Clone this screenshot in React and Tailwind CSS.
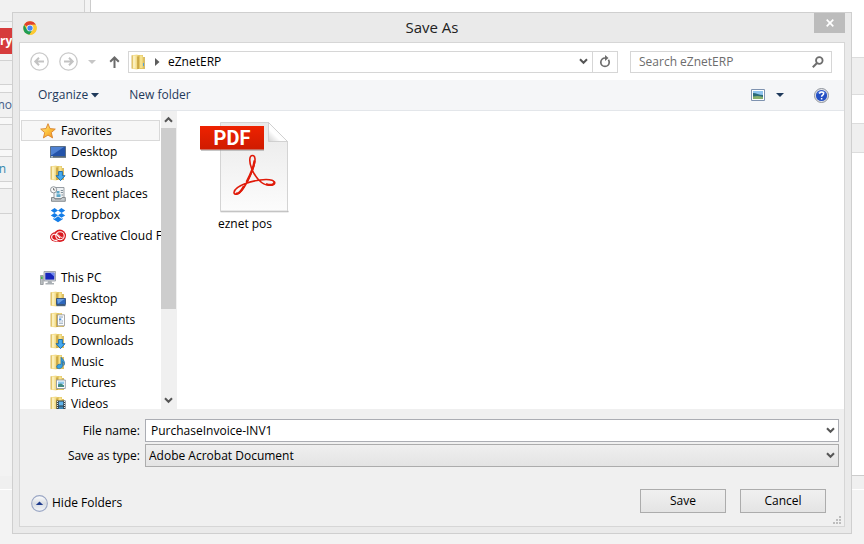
import React from "react";

const Chevron = ({ className = "" }) => (
  <svg width="9" height="7" viewBox="0 0 9 7" className={className} aria-hidden="true">
    <path d="M1 1.2 4.5 4.8 8 1.2" fill="none" stroke="#555555" strokeWidth="2" />
  </svg>
);

const ChromeLogo = () => (
  <svg width="14" height="14" viewBox="0 0 48 48" aria-hidden="true">
    <circle cx="24" cy="24" r="23" fill="#fcc934" />
    <path d="M24 24 4 12.5A23 23 0 0 1 44 12.5H24z" fill="#e0402f" />
    <path d="M4 12.5A23 23 0 0 0 22 47L34 30 24 24 14 30z" fill="#1f9d55" />
    <path d="M44 12.5A23 23 0 0 1 22 47L34 30 32 12.5z" fill="#fcc934" />
    <circle cx="24" cy="24" r="11.5" fill="#f4f4f4" />
    <circle cx="24" cy="24" r="9" fill="#4285f4" />
  </svg>
);

const NavArrow = ({ flip }) => (
  <svg width="19" height="19" viewBox="0 0 19 19" className={flip ? "rotate-180" : ""} aria-hidden="true">
    <circle cx="9.5" cy="9.5" r="8.7" fill="none" stroke="#c9c9c9" strokeWidth="1.3" />
    <path d="M5.5 9.5H14M9 5.8 5.3 9.5 9 13.2" fill="none" stroke="#c3c3c3" strokeWidth="2" />
  </svg>
);

const FolderBase = () => (
  <g>
    <path d="M6 1h6v2h1.500v12H6z" fill="#e3c766" />
    <path d="M9 1.500h2.500V14H9z" fill="#f5e190" />
    <path d="M1 1.200 6.500.500V15.500L1 14.800z" fill="#f4dd8a" />
    <path d="M2 1.800h2.500v12.500H2z" fill="#fbefbb" />
    <path d="M1 1.300v13.300M13.300 3v12" stroke="#cba53e" strokeWidth=".8" fill="none" />
    <path d="M7 2.500v12.500" stroke="#bd9430" strokeWidth="1.200" fill="none" />
  </g>
);

const Badges = {
  none: <path d="M12.500 9v3" stroke="#53a0d8" strokeWidth="1" />,
  download: (
    <path d="M8.6 6.5h3.8v4.2h2.6L10.5 15.6 6 10.7h2.6z" fill="#45aaf0" stroke="#1767a8" strokeWidth=".9" />
  ),
  desktop: (
    <g>
      <path d="M6.5 7.5h9v6h-9z" fill="#2d67bd" stroke="#294873" strokeWidth=".8" />
      <path d="M7 8h7.5L8 12.8z" fill="#699ee3" />
      <path d="M6.5 14h9v1.2h-9z" fill="#45617c" />
    </g>
  ),
  document: (
    <g>
      <path d="M7.5 2.8h7v11h-7z" fill="#fafcff" stroke="#939393" strokeWidth=".8" />
      <path d="M9 5h4M9 9h1.5M11.5 9H13M9 11.2h4" stroke="#8597aa" strokeWidth=".9" />
      <path d="M9 6.4h2.3v1.8H9z" fill="#4d94df" />
    </g>
  ),
  music: (
    <path d="M11 3.2v7.2c-2-.7-4.3.5-4.3 2.4 0 2.6 5.8 2.6 5.8-1.2V7.3c1.5 1 1.8 2.3 1.2 4.2 2-3 .3-5-2.7-8.3z" fill="#36a2e6" stroke="#1d679f" strokeWidth=".7" />
  ),
  picture: (
    <g>
      <path d="M6.5 5h8.8v8.5H6.5z" fill="#fff" stroke="#9199a1" strokeWidth=".9" />
      <path d="M8 6.5h6V9H8z" fill="#8fc8ed" />
      <path d="M8 9.2l3-.8 3 1.8V12H8z" fill="#438b83" />
    </g>
  ),
  video: (
    <g>
      <path d="M6.5 4.5h9v11h-9z" fill="#333e46" />
      <path d="M8.7 5.5h4.6v4H8.7z" fill="#5fb3ea" />
      <path d="M8.7 10.5h4.6v4H8.7z" fill="#3d86b7" />
      <path d="M7.5 5v10M14.5 5v10" stroke="#dfe5e9" strokeWidth="1" strokeDasharray="1 1" />
    </g>
  ),
};

const Folder = ({ badge = "none" }) => (
  <svg width="16" height="16" viewBox="0 0 16 16" aria-hidden="true">
    <FolderBase />
    {Badges[badge]}
  </svg>
);

const Star = () => (
  <svg width="16" height="16" viewBox="0 0 16 16" aria-hidden="true">
    <defs>
      <linearGradient id="star" x1="0" y1="0" x2="1" y2="1">
        <stop offset="0" stopColor="#fff2a5" />
        <stop offset=".5" stopColor="#fcc33f" />
        <stop offset="1" stopColor="#f08a1c" />
      </linearGradient>
    </defs>
    <path d="M8 .7 10 5.6l5.3.5-4 3.5 1.3 5.3L8 12.1l-4.600 2.800 1.300-5.300-4-3.500L6 5.600z" fill="url(#star)" stroke="#d9822b" strokeWidth=".9" strokeLinejoin="round" />
  </svg>
);

const DesktopIcon = () => (
  <svg width="16" height="16" viewBox="0 0 16 16" aria-hidden="true">
    <path d="M.5 2.5h15v10H.5z" fill="#2353a9" stroke="#5b6f86" />
    <path d="M1 3h13L2 11H1z" fill="#4f82d3" />
    <path d="M0 12.4h16v1.4H0z" fill="#53636f" />
    <path d="M1 12.8h2" stroke="#cfe2ef" />
  </svg>
);

const RecentIcon = () => (
  <svg width="16" height="16" viewBox="0 0 16 16" aria-hidden="true">
    <path d="M4 1.500h10v11H4z" fill="#eef1f3" stroke="#8b9298" strokeWidth=".9" />
    <path d="M6.500 5h3v2.500h-3zM6.500 8.300h4v2.700h-4z" fill="#5aa7c9" />
    <path d="M10.8 4.500H13M10.8 6.500H13M11.500 9H13" stroke="#748791" strokeWidth=".9" />
    <path d="M1.500 15.300V11.500H4l1 1.500h6l1-1.500h3.300v3.800z" fill="#c4c9cc" stroke="#7d8286" strokeWidth=".9" />
    <circle cx="3.6" cy="3.8" r="3.100" fill="#fafafa" stroke="#8e9499" strokeWidth="1" />
    <path d="M3.6 2v2h1.6" fill="none" stroke="#555" strokeWidth=".8" />
  </svg>
);

const DropboxIcon = () => (
  <svg width="16" height="16" viewBox="0 0 16 16" fill="#147de8" aria-hidden="true">
    <path d="M4.600 1 8 3.400 4.400 5.900.800 3.400zM11.400 1 15.200 3.400l-3.600 2.500L8 3.400zM.800 8.400l3.600-2.500L8 8.300l-3.400 2.500zM11.600 5.900 15.200 8.400l-3.800 2.400L8 8.300zM8 9.300l3.400 2.400 1.300-.8v1.400L8 15.200l-4.700-2.900v-1.400l1.300.8z" />
  </svg>
);

const CreativeCloudIcon = () => (
  <svg width="16" height="14" viewBox="0 0 16 14" aria-hidden="true">
    <ellipse cx="5.500" cy="8" rx="5.500" ry="4.700" fill="#da1a20" />
    <ellipse cx="9.800" cy="6.800" rx="6.200" ry="6.200" fill="#da1a20" />
    <ellipse cx="10" cy="6.700" rx="4.200" ry="4" fill="none" stroke="#fff" strokeWidth="1.100" />
    <path d="M7.500 11.200C4 11.800 1.600 10.300 1.600 8c0-2.800 3.800-3.800 5.900-1.500L10 9" fill="none" stroke="#fff" strokeWidth="1.100" />
    <path d="M12.500 8.200c-2.500 1.200-3.500-2.700-5.500-3.500" fill="none" stroke="#fff" strokeWidth="1" />
  </svg>
);

const ComputerIcon = () => (
  <svg width="16" height="16" viewBox="0 0 16 16" aria-hidden="true">
    <path d="M.4 5.500h2.800v9H.4z" fill="#b9bec1" stroke="#82878b" strokeWidth=".7" />
    <path d="M1 6.500h1.600v2.500H1z" fill="#45b64b" />
    <path d="M4 1.500h11.500v9.500H4z" fill="#d3d8dd" stroke="#9298a0" strokeWidth=".8" />
    <path d="M5.300 2.800h9v6.800h-9z" fill="#1726bb" />
    <path d="M10 2.800h4.300v4z" fill="#6f89f0" />
    <path d="M8 11h3.500l.6 2H14v1.500H5.500V13h2z" fill="#a9afb4" />
  </svg>
);

const PdfFile = () => (
  <svg width="90" height="92" viewBox="0 0 90 92" aria-hidden="true">
    <defs>
      <linearGradient id="sheet" x1="0" y1="0" x2="0" y2="1">
        <stop offset="0" stopColor="#e9e9e9" />
        <stop offset="1" stopColor="#fcfcfc" />
      </linearGradient>
      <linearGradient id="fold" x1="0" y1="1" x2="1" y2="0">
        <stop offset="0" stopColor="#d2d2d2" />
        <stop offset=".35" stopColor="#fff" />
        <stop offset="1" stopColor="#f2f2f2" />
      </linearGradient>
      <linearGradient id="ribbon" x1="0" y1="0" x2="0" y2="1">
        <stop offset="0" stopColor="#ee2200" />
        <stop offset="1" stopColor="#cf1b00" />
      </linearGradient>
    </defs>
    <path d="M20.500 89.500h68" stroke="#b5b5b5" strokeWidth="1.500" />
    <path d="M20.500.500h48l19 19v69.500h-67z" fill="url(#sheet)" stroke="#d4d4d4" />
    <path d="M68.500.500 87.500 19.500h-19z" fill="url(#fold)" stroke="#c9c9c9" strokeWidth=".8" />
    <path d="M1 28h63" stroke="#8d8d8d" strokeWidth="1" />
    <path d="M0 4h64v23.500H0z" fill="url(#ribbon)" />
    <text x="32" y="23" textAnchor="middle" fill="#fff" className="font-['Liberation_Sans_Narrow','Roboto',sans-serif] text-[20px] font-bold">PDF</text>
    <path
      d="M52.500 33.500c-3.500 0-3.500 6.500-.8 13.200 3.300 8.300 9.800 16.200 17.300 16.600 5.500.2 7-3.600 3-5-5.500-1.800-17.500-.2-26.500 3.200-6.500 2.500-11.700 6-11.500 9.200.2 2.500 4.300 2.300 7.800-2.200C47.500 61 55.500 43.500 55 36.700 54.800 34.500 54 33.500 52.500 33.500z"
      fill="none"
      stroke="#e01b0a"
      strokeWidth="1.600"
    />
    <path d="M54.600 38.500c-1 7-4.500 15-8 21.500M35.500 71.500c2.500 1 6-3 8.500-7.500M66 62c5 2 10 .5 8-2.500" fill="none" stroke="#e01b0a" strokeWidth="2.200" />
  </svg>
);

const favorites = [
  { name: "Desktop", icon: <DesktopIcon /> },
  { name: "Downloads", icon: <Folder badge="download" /> },
  { name: "Recent places", icon: <RecentIcon /> },
  { name: "Dropbox", icon: <DropboxIcon /> },
  { name: "Creative Cloud Fi", icon: <CreativeCloudIcon /> },
];

const places = [
  { name: "Desktop", icon: <Folder badge="desktop" /> },
  { name: "Documents", icon: <Folder badge="document" /> },
  { name: "Downloads", icon: <Folder badge="download" /> },
  { name: "Music", icon: <Folder badge="music" /> },
  { name: "Pictures", icon: <Folder badge="picture" /> },
  { name: "Videos", icon: <Folder badge="video" /> },
];

function TreeGroup({ name, icon, items, selected }) {
  return (
    <section>
      <button
        type="button"
        className={
          "flex h-[21px] w-full items-center gap-[5px] border pl-[18px] " +
          (selected ? "border-[#d9d9d9] bg-[#f7f7f7]" : "border-transparent")
        }
      >
        {icon}
        {name}
      </button>
      <ul>
        {items.map((item) => (
          <li key={item.name}>
            <button type="button" className="flex h-[21px] items-center gap-[5px] pl-[29px] whitespace-nowrap">
              <span className="flex w-4 shrink-0 justify-center">{item.icon}</span>
              {item.name}
            </button>
          </li>
        ))}
      </ul>
    </section>
  );
}

function PageBehind() {
  return (
    <div className="col-start-1 row-start-1 flex flex-col bg-[#f3f3f3]" aria-hidden="true">
      <div className="flex h-[476px]">
        <div className="w-[85px] shrink-0">
          <div className="h-[22px] border-r border-b border-[#d2d2d2] bg-[#f1f1f1]" />
          <div className="h-[39px] border-r border-b border-[#d2d2d2] pt-[6px]">
            <div className="h-[26px] bg-[#d63c3c] text-xs leading-[26px] font-bold text-white">ry</div>
          </div>
          <div className="h-6 border-b border-[#d2d2d2] bg-[#f1f1f1]" />
          <div className="h-2 border-b border-[#d2d2d2] bg-[#f8f8f8]" />
          <div className="h-[25px] border-b border-[#d2d2d2] bg-[#f1f1f1]">
            <div className="flex w-3 justify-end text-xs leading-6 text-[#46608a]">mo</div>
          </div>
          <div className="h-[7px] border-b border-[#d2d2d2] bg-[#f8f8f8]" />
          <div className="h-[25px] border-b border-[#d2d2d2] bg-[#f1f1f1]" />
          <div className="h-[7px] border-b border-[#d2d2d2] bg-[#f8f8f8]" />
          <div className="h-[25px] border-b border-[#d2d2d2] bg-[#f1f1f1]">
            <div className="flex w-[6px] justify-end text-xs leading-6 text-[#3387ad]">n</div>
          </div>
          <div className="h-[7px] border-b border-[#d2d2d2] bg-[#f8f8f8]" />
          <div className="h-[25px] border-b border-[#d2d2d2] bg-[#f1f1f1]" />
        </div>
        <div className="ml-[5px] flex-1 border-b border-l border-[#cccccc] bg-white pt-[57px]">
          <div className="h-[38px] border-y border-[#dcdcdc] bg-[#efefef]" />
          <div className="mt-7 h-[30px] border-y border-[#dcdcdc] bg-[#efefef]" />
        </div>
      </div>
      <div className="h-[14px] border-b border-white bg-[#f0f0f0]" />
    </div>
  );
}

export default function App() {
  return (
    <div className="grid h-screen grid-cols-1 grid-rows-1 overflow-hidden font-['Open_Sans','Noto_Sans',sans-serif] text-xs text-black">
      <PageBehind />
      <main
        role="dialog"
        aria-labelledby="title"
        className="relative col-start-1 row-start-1 mx-3 mt-3 mb-[10px] flex min-h-0 flex-col border border-[#cfcfcf] bg-[#eaeaea] px-[6px] pb-[6px]"
      >
        <header className="grid h-[29px] shrink-0 grid-cols-[1fr_auto_1fr]">
          <div className="flex items-center pl-1">
            <ChromeLogo />
          </div>
          <h1 id="title" className="text-[15px] leading-7 text-[#222222]">Save As</h1>
          <button type="button" aria-label="Close" className="flex h-5 w-[31px] items-center justify-center justify-self-end bg-[#bcbcbc]">
            <svg width="8" height="8" viewBox="0 0 8 8" aria-hidden="true">
              <path d="M.7.700 7.300 7.300M7.300.700.700 7.300" stroke="#fff" strokeWidth="1.700" />
            </svg>
          </button>
        </header>

        <div className="flex min-h-0 flex-1 flex-col border border-[#d6d6d6] bg-white">
          <div className="flex h-[37px] shrink-0 items-center pr-3 pl-[10px]">
            <button type="button" aria-label="Back"><NavArrow /></button>
            <button type="button" aria-label="Forward" className="ml-[10px]"><NavArrow flip /></button>
            <button type="button" aria-label="Recent locations" className="ml-[10px]">
              <svg width="8" height="4" viewBox="0 0 8 4" aria-hidden="true"><path d="M0 0h8L4 4z" fill="#c6c6c6" /></svg>
            </button>
            <button type="button" aria-label="Up" className="ml-[13px]">
              <svg width="11" height="12" viewBox="0 0 11 12" aria-hidden="true">
                <path d="M5.500 12V1.500M1.200 5.800 5.500 1.500l4.300 4.300" fill="none" stroke="#6b6b6b" strokeWidth="2" />
              </svg>
            </button>
            <div className="ml-2 flex h-[22px] flex-1 border border-[#d6d6d6]">
              <nav aria-label="Address" className="flex flex-1 items-center pl-[2px]">
                <Folder />
                <svg width="5" height="8" viewBox="0 0 5 8" className="ml-2" aria-hidden="true"><path d="M0 0v8l4.500-4z" fill="#5d5d5d" /></svg>
                <a href="#eznet" className="ml-2 leading-5">eZnetERP</a>
              </nav>
              <button type="button" aria-label="Previous locations" className="px-1"><Chevron /></button>
              <button type="button" aria-label="Refresh" className="flex w-[25px] items-center justify-center border-l border-[#d6d6d6]">
                <svg width="12" height="13" viewBox="0 0 12 13" aria-hidden="true">
                  <path d="M6.500 3H6a4.200 4.200 0 1 0 4.200 4.200c0-1-.3-1.800-.8-2.500" fill="none" stroke="#6d6d6d" strokeWidth="1.700" />
                  <path d="M6 0v6l3.500-3z" fill="#6d6d6d" />
                </svg>
              </button>
            </div>
            <label className="ml-3 flex h-[22px] w-[202px] items-center border border-[#d6d6d6] pr-[7px] pl-2">
              <input aria-label="Search eZnetERP" placeholder="Search eZnetERP" className="w-full min-w-0 outline-none placeholder:text-[#6d6d6d]" />
              <svg width="12" height="12" viewBox="0 0 12 12" className="shrink-0" aria-hidden="true">
                <circle cx="7.300" cy="4.500" r="3.300" fill="none" stroke="#6d6d6d" strokeWidth="1.800" />
                <path d="M5 7 .800 11.200" stroke="#6d6d6d" strokeWidth="2" />
              </svg>
            </label>
          </div>

          <div className="flex h-[31px] shrink-0 items-center border-b border-[#e3e6ea] bg-[#f5f6f8] pr-[15px] pl-[18px] text-[#1e395b]">
            <button type="button" className="flex items-center gap-[3px]">
              Organize
              <svg width="8" height="5" viewBox="0 0 8 5" aria-hidden="true"><path d="M0 0h8L4 4.500z" fill="#1e395b" /></svg>
            </button>
            <button type="button" className="ml-[30px]">New folder</button>
            <button type="button" aria-label="Change view" className="ml-auto">
              <svg width="14" height="12" viewBox="0 0 14 12" aria-hidden="true">
                <path d="M.5.500h13v11H.500z" fill="#fff" stroke="#7f93b0" />
                <path d="M2 2h10v4H2z" fill="#8fc4ef" />
                <path d="M2 4c3 0 6 2 10 2v4H2z" fill="#2c6b7a" />
                <path d="M2 7.500c4-1 7-.5 10 .500V10H2z" fill="#87b06e" />
              </svg>
            </button>
            <button type="button" aria-label="More views" className="ml-[11px]">
              <svg width="8" height="4" viewBox="0 0 8 4" aria-hidden="true"><path d="M0 0h8L4 4z" fill="#1e395b" /></svg>
            </button>
            <button type="button" aria-label="Help" className="ml-[30px]">
              <svg width="15" height="15" viewBox="0 0 15 15" aria-hidden="true">
                <circle cx="7.500" cy="7.500" r="7" fill="#e4e6ea" stroke="#8f949c" />
                <circle cx="7.500" cy="7.500" r="5.600" fill="#2450c4" />
                <path d="M3 5.500a5 5 0 0 1 9 0c-3-1-6-1-9 0z" fill="#6f92e8" />
                <path d="M5.600 5.800c0-2.400 4-2.400 4 0 0 1.400-2 1.300-2 3M7.600 10v1.400" fill="none" stroke="#fff" strokeWidth="1.500" />
              </svg>
            </button>
          </div>

          <div className="flex min-h-0 flex-1">
            <nav aria-label="Folders" className="flex w-[141px] flex-col gap-[21px] overflow-hidden pt-[9px] pr-px pl-px">
              <TreeGroup name="Favorites" icon={<Star />} items={favorites} selected />
              <TreeGroup name="This PC" icon={<ComputerIcon />} items={places} />
            </nav>
            <div className="flex w-[15px] shrink-0 flex-col items-center bg-[#f0f0f0]">
              <button type="button" aria-label="Scroll up" className="flex h-[17px] shrink-0 items-center"><Chevron className="rotate-180" /></button>
              <div className="h-[181px] w-[15px] bg-[#cdcdcd]" />
              <button type="button" aria-label="Scroll down" className="mt-auto flex h-[17px] items-center"><Chevron /></button>
            </div>
            <div className="flex-1 border-l border-[#f0f0f0] pt-[11px] pl-[23px]">
              <button type="button" className="flex w-[90px] flex-col items-center">
                <PdfFile />
                <span className="leading-5">eznet pos</span>
              </button>
            </div>
          </div>

          <form className="shrink-0 bg-[#f0f0f0] pt-[10px]" onSubmit={(e) => e.preventDefault()}>
            <div className="grid grid-cols-[120px_1fr] items-center gap-x-[5px] gap-y-[2px] pr-[5px]">
              <label htmlFor="file-name" className="text-right">File name:</label>
              <div className="flex h-[23px] items-center border border-[#abadb3] bg-white pr-[3px] pl-[5px]">
                <input id="file-name" defaultValue="PurchaseInvoice-INV1" className="min-w-0 flex-1 outline-none" />
                <button type="button" aria-label="Recent names"><Chevron /></button>
              </div>
              <label htmlFor="file-type" className="text-right">Save as type:</label>
              <div className="grid h-[23px] items-center border border-[#acacac] bg-linear-to-b from-[#efefef] to-[#e4e4e4]">
                <select id="file-type" className="col-start-1 row-start-1 appearance-none pl-[3px] outline-none">
                  <option>Adobe Acrobat Document</option>
                </select>
                <Chevron className="pointer-events-none col-start-1 row-start-1 mr-[3px] justify-self-end" />
              </div>
            </div>
            <div className="mt-[22px] flex items-center pr-[18px] pl-[11px]">
              <button type="button" className="flex items-center gap-1 pt-1">
                <svg width="17" height="17" viewBox="0 0 16 16" aria-hidden="true">
                  <defs>
                    <linearGradient id="orb" x1="0" y1="0" x2="0" y2="1">
                      <stop offset="0" stopColor="#fff" />
                      <stop offset=".5" stopColor="#d8dce2" />
                      <stop offset="1" stopColor="#f5f7fa" />
                    </linearGradient>
                  </defs>
                  <circle cx="8" cy="8" r="7.400" fill="url(#orb)" stroke="#9aa6c4" />
                  <path d="M4.500 9.500h7L8 6z" fill="#1d3a8c" />
                </svg>
                Hide Folders
              </button>
              <button type="submit" className="ml-auto h-6 w-[86px] border border-[#acacac] bg-linear-to-b from-[#f0f0f0] to-[#e4e4e4]">Save</button>
              <button type="button" className="ml-[14px] h-6 w-[86px] border border-[#acacac] bg-linear-to-b from-[#f0f0f0] to-[#e4e4e4]">Cancel</button>
            </div>
            <div className="flex h-[13px] items-end justify-end pr-[3px] pb-[2px]">
              <svg width="8" height="8" viewBox="0 0 8 8" fill="#bdbdbd" aria-hidden="true">
                <path d="M6 0h2v2H6zM3 3h2v2H3zM6 3h2v2H6zM0 6h2v2H0zM3 6h2v2H3zM6 6h2v2H6z" />
              </svg>
            </div>
          </form>
        </div>
      </main>
    </div>
  );
}
